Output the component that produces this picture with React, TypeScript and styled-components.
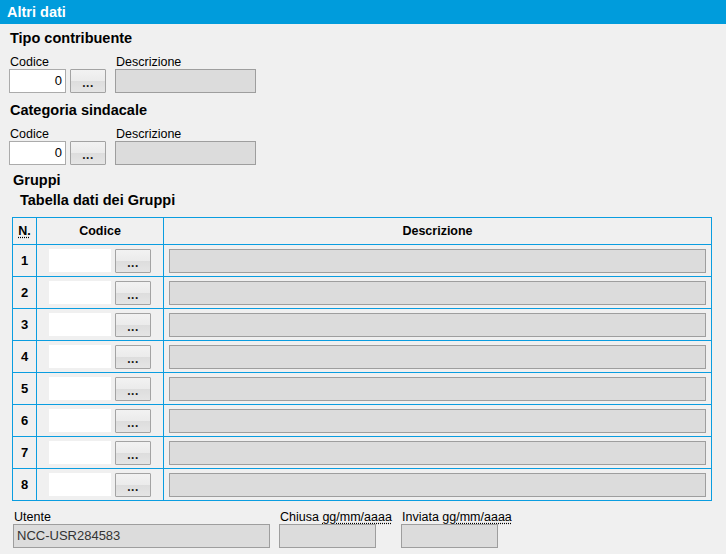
import { createGlobalStyle } from "styled-components";
import styled from "styled-components";

// <styled>
const GlobalStyle = createGlobalStyle`
  html, body {
    margin: 0;
    padding: 0;
    background: #f0f0f0;
    font-family: "Liberation Sans", Arial, sans-serif;
    font-size: 12.5px;
    color: #000;
  }
`;

const Page = styled.div`
  width: 726px;
  height: 554px;
  overflow: hidden;
  background: #f0f0f0;
`;

const TitleBar = styled.div`
  height: 24px;
  line-height: 24px;
  padding-left: 7px;
  background: #009cdc;
  color: #fff;
  font-weight: bold;
  font-size: 14.5px;
`;

const Body = styled.div`
  padding: 0 14px 0 9px;
`;

const SectionTitle = styled.div<{ $indent?: number; $top?: number }>`
  font-weight: bold;
  font-size: 14.5px;
  line-height: 18px;
  height: 18px;
  margin-top: ${(p) => p.$top ?? 8}px;
  padding-left: ${(p) => p.$indent ?? 1}px;
`;

const FieldRow = styled.div`
  display: flex;
  align-items: flex-end;
  margin-top: 8px;
`;

const Field = styled.div<{ $gap?: number; $w?: number }>`
  display: flex;
  flex-direction: column;
  width: ${(p) => (p.$w ? `${p.$w}px` : "auto")};
  margin-right: ${(p) => p.$gap ?? 0}px;
`;

const Label = styled.div`
  line-height: 14px;
  height: 14px;
  padding-left: 1px;
  white-space: nowrap;
`;

const Dotted = styled.span`
  text-decoration: underline dotted;
  text-underline-offset: 2px;
`;

const CodeInput = styled.div`
  box-sizing: border-box;
  width: 57px;
  height: 24px;
  background: #fff;
  border: 1px solid #ababab;
  text-align: right;
  padding-right: 3px;
  line-height: 22px;
  font-size: 13px;
`;

const PickButton = styled.div`
  box-sizing: border-box;
  width: 36px;
  height: 24px;
  margin-left: 4px;
  border: 1px solid #a3a3a3;
  border-radius: 1px;
  background: linear-gradient(#f2f2f2 0%, #ebebeb 50%, #dddddd 50%, #e5e5e5 100%);
  color: #1a1a1a;
  font-weight: bold;
  font-size: 12px;
  text-align: center;
  line-height: 26px;
  letter-spacing: 0.5px;
`;

const ReadBox = styled.div<{ $w?: number }>`
  box-sizing: border-box;
  width: ${(p) => (p.$w ? `${p.$w}px` : "100%")};
  height: 24px;
  background: #dcdcdc;
  border: 1px solid #9e9e9e;
  color: #333;
  font-size: 13px;
  line-height: 22px;
  padding-left: 3px;
`;

const InputPair = styled.div`
  display: flex;
`;

const Grid = styled.div`
  margin: 8px 0 0 3px;
  display: grid;
  grid-template-columns: 23px 126px 1fr;
  grid-template-rows: 26px repeat(8, 31px);
  gap: 1px;
  background: #0a9de0;
  border: 1px solid #0a9de0;
`;

const HeadCell = styled.div`
  background: #f0f0f0;
  display: flex;
  align-items: center;
  justify-content: center;
  font-weight: bold;
`;

const NumCell = styled.div`
  background: #f0f0f0;
  display: flex;
  align-items: center;
  justify-content: center;
  font-weight: bold;
  font-size: 13px;
`;

const CodeCell = styled.div`
  background: #f0f0f0;
  display: flex;
  align-items: center;
  padding-left: 12px;
`;

const RowCode = styled.div`
  width: 62px;
  height: 23px;
  background: #fff;
`;

const DescCell = styled.div`
  background: #f0f0f0;
  display: flex;
  align-items: center;
  padding: 0 5px;
`;

const Footer = styled.div`
  display: flex;
  margin: 9px 0 0 4px;
`;
// </styled>

const rows = [1, 2, 3, 4, 5, 6, 7, 8];

function CodeField() {
  return (
    <FieldRow>
      <Field $gap={9}>
        <Label>Codice</Label>
        <InputPair>
          <CodeInput>0</CodeInput>
          <PickButton>...</PickButton>
        </InputPair>
      </Field>
      <Field>
        <Label>Descrizione</Label>
        <ReadBox $w={141} />
      </Field>
    </FieldRow>
  );
}

export default function App() {
  return (
    <Page>
      <GlobalStyle />
      <TitleBar>Altri dati</TitleBar>
      <Body>
        <SectionTitle $top={5}>Tipo contribuente</SectionTitle>
        <CodeField />
        <SectionTitle>Categoria sindacale</SectionTitle>
        <CodeField />
        <SectionTitle $top={6} $indent={4}>
          Gruppi
        </SectionTitle>
        <SectionTitle $top={2} $indent={11}>
          Tabella dati dei Gruppi
        </SectionTitle>
        <Grid>
          <HeadCell>
            <Dotted>N.</Dotted>
          </HeadCell>
          <HeadCell>Codice</HeadCell>
          <HeadCell>Descrizione</HeadCell>
          {rows.map((n) => (
            <>
              <NumCell key={`n${n}`}>{n}</NumCell>
              <CodeCell key={`c${n}`}>
                <RowCode />
                <PickButton>...</PickButton>
              </CodeCell>
              <DescCell key={`d${n}`}>
                <ReadBox />
              </DescCell>
            </>
          ))}
        </Grid>
        <Footer>
          <Field $gap={9}>
            <Label>Utente</Label>
            <ReadBox $w={257}>NCC-USR284583</ReadBox>
          </Field>
          <Field $gap={9} $w={113}>
            <Label>
              Chiusa <Dotted>gg/mm/aaaa</Dotted>
            </Label>
            <ReadBox $w={97} />
          </Field>
          <Field $w={113}>
            <Label>
              Inviata <Dotted>gg/mm/aaaa</Dotted>
            </Label>
            <ReadBox $w={97} />
          </Field>
        </Footer>
      </Body>
    </Page>
  );
}
